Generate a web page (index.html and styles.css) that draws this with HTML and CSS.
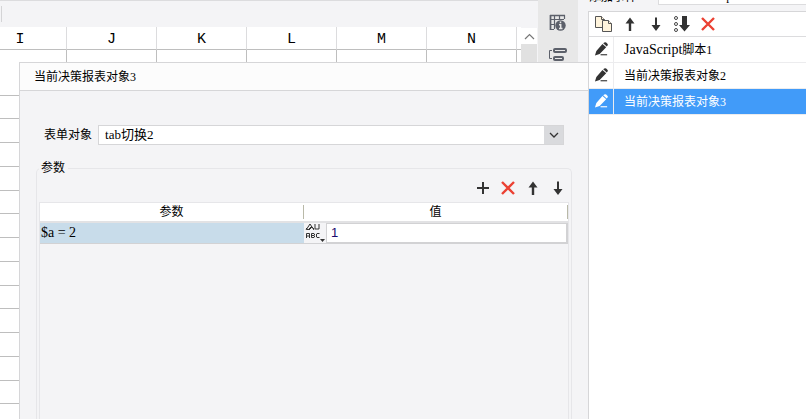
FILE: index.html
```html
<!DOCTYPE html>
<html lang="zh-CN">
<head>
  <meta charset="UTF-8" />
  <title>当前决策报表对象</title>
  <link rel="stylesheet" href="styles.css">
</head>
<body>
  <!-- shared icons -->
  <svg class="hidden">
    <symbol id="up" viewBox="0 0 16 16"><path d="M8 1.5L12.5 7.5H9.2V15H6.8V7.5H3.5Z" /></symbol>
    <symbol id="down" viewBox="0 0 16 16"><path d="M8 15L12.5 9H9V1.5H7V9H3.5Z" /></symbol>
    <symbol id="cross" viewBox="0 0 16 16"><path d="M2 2L14 14M14 2L2 14" fill="none" stroke="#eb4133" stroke-width="2.4" /></symbol>
    <symbol id="pen" viewBox="0 0 16 16"><path d="M1 14.500L2.500 9.500L9 2L13 5.500L6 12.800ZM9.800 1.300L11 .4Q12 -.2 13 .6L14.300 1.800Q15.200 2.800 14.400 3.800L13.600 4.800Z" /><path d="M7 13H14V14.200H7Z" /></symbol>
  </svg>

  <div class="app">
    <!-- Spreadsheet -->
    <div class="sheet">
      <div class="sheet-bar"><span class="sep"></span></div>
      <div class="sheet-main">
        <div class="grid">
          <table class="cells">
            <colgroup><col class="first"><col><col><col><col><col><col></colgroup>
            <thead>
              <tr><th>I</th><th>J</th><th>K</th><th>L</th><th>M</th><th>N</th><th></th></tr>
            </thead>
            <tbody>
              <tr><td></td><td></td><td></td><td></td><td></td><td></td><td></td></tr>
              <tr><td></td><td></td><td></td><td></td><td></td><td></td><td></td></tr>
              <tr><td></td><td></td><td></td><td></td><td></td><td></td><td></td></tr>
              <tr><td></td><td></td><td></td><td></td><td></td><td></td><td></td></tr>
              <tr><td></td><td></td><td></td><td></td><td></td><td></td><td></td></tr>
              <tr><td></td><td></td><td></td><td></td><td></td><td></td><td></td></tr>
              <tr><td></td><td></td><td></td><td></td><td></td><td></td><td></td></tr>
              <tr><td></td><td></td><td></td><td></td><td></td><td></td><td></td></tr>
              <tr><td></td><td></td><td></td><td></td><td></td><td></td><td></td></tr>
              <tr><td></td><td></td><td></td><td></td><td></td><td></td><td></td></tr>
              <tr><td></td><td></td><td></td><td></td><td></td><td></td><td></td></tr>
              <tr><td></td><td></td><td></td><td></td><td></td><td></td><td></td></tr>
              <tr><td></td><td></td><td></td><td></td><td></td><td></td><td></td></tr>
              <tr><td></td><td></td><td></td><td></td><td></td><td></td><td></td></tr>
            </tbody>
          </table>
        </div>
        <div class="scroll">
          <button class="scroll-up" aria-label="向上滚动"><svg width="11" height="7" viewBox="0 0 11 7"><path d="M1 6L5.500 1.500L10 6" fill="none" stroke="#777" stroke-width="1.200" /></svg></button>
          <div class="thumb"></div>
        </div>
      </div>
    </div>

    <!-- Tool strip -->
    <div class="strip">
      <button aria-label="单元格属性">
        <svg width="18" height="18" viewBox="0 0 18 18" fill="none" stroke="#5c606a">
          <path d="M5 15.500H1.500V1.500H15.500V5M2 5.500H15M5.500 2V15M10.500 2V6M2 10.500H6" stroke-width="1.200" />
          <path d="M1 1.500H16M1.500 1V16" stroke-width="1.600" />
          <circle cx="11.500" cy="11.500" r="5.200" fill="#5c606a" stroke="none" />
          <path d="M11.500 7.500V9.200M10 10.700H11.700V14.500M10 14.500H13.500" stroke="#e8e8e8" stroke-width="1.500" />
        </svg>
      </button>
      <button aria-label="控件设置">
        <svg width="20" height="14" viewBox="0 0 20 14" fill="none" stroke="#5c606a">
          <path d="M4 2.500H1.500V10.500H4" />
          <rect x="6" y="1" width="12" height="3" rx="1" stroke-width="2" />
          <rect x="6" y="9" width="9" height="3" rx="1" stroke-width="2" />
        </svg>
      </button>
    </div>

    <!-- Event list -->
    <div class="panel">
      <div class="tabs">
        <button class="tab"><span>添加事件</span></button>
        <button class="tab second"><span>JavaScript</span></button>
      </div>
      <div class="list-box">
        <div class="tools">
          <button aria-label="复制">
            <svg width="18" height="16" viewBox="0 0 18 16" fill="#fff4dc" stroke="#555">
              <path d="M.5 .5H6.500L9.500 3.500V11.500H.5Z" /><path d="M6.500 .5V3.500H9.500" />
              <path d="M7.500 4.500H13.500L16.500 7.500V15.500H7.500Z" /><path d="M13.500 4.500V7.500H16.500" />
            </svg>
          </button>
          <button aria-label="上移"><svg width="16" height="16"><use href="#up" /></svg></button>
          <button aria-label="下移"><svg width="16" height="16"><use href="#down" /></svg></button>
          <button aria-label="排序">
            <svg width="18" height="18" viewBox="0 0 18 18">
              <g fill="none" stroke="#444"><circle cx="3" cy="3" r="1.500" /><circle cx="3" cy="9" r="1.500" /><circle cx="3" cy="15" r="1.500" /></g>
              <path d="M9 1H14V10H17L11.500 16.500L6 10H9Z" />
            </svg>
          </button>
          <button aria-label="删除"><svg width="16" height="16"><use href="#cross" /></svg></button>
        </div>
        <ul class="events">
          <li><span class="edit"><svg width="15" height="15"><use href="#pen" /></svg></span><span class="name"><span class="latin">JavaScript</span>脚本1</span></li>
          <li><span class="edit"><svg width="15" height="15"><use href="#pen" /></svg></span><span class="name">当前决策报表对象2</span></li>
          <li class="active"><span class="edit"><svg width="15" height="15"><use href="#pen" /></svg></span><span class="name">当前决策报表对象3</span></li>
        </ul>
      </div>
    </div>

    <!-- Dialog over the sheet -->
    <div class="dialog">
      <div class="dialog-title">当前决策报表对象3</div>
      <div class="dialog-body">
        <div class="field">
          <label for="target">表单对象</label>
          <div class="combo">
            <select id="target"><option>tab切换2</option></select>
            <span class="arrow"><svg width="10" height="6" viewBox="0 0 10 6"><path d="M1 1L5 5L9 1" fill="none" stroke="#333" stroke-width="1.300" /></svg></span>
          </div>
        </div>
        <fieldset>
          <legend>参数</legend>
          <div class="param-tools">
            <button aria-label="添加"><svg width="16" height="16" viewBox="0 0 16 16"><path d="M7 2H9V7H14V9H9V14H7V9H2V7H7Z" /></svg></button>
            <button aria-label="删除"><svg width="16" height="16"><use href="#cross" /></svg></button>
            <button aria-label="上移"><svg width="16" height="16"><use href="#up" /></svg></button>
            <button aria-label="下移"><svg width="16" height="16"><use href="#down" /></svg></button>
          </div>
          <div class="param-box">
            <table class="params">
              <thead>
                <tr><th><span>参数</span></th><th><span>值</span></th></tr>
              </thead>
              <tbody>
                <tr>
                  <td class="key">$a = 2</td>
                  <td>
                    <div class="value">
                      <button class="type" aria-label="类型">
                        <svg width="21" height="20" viewBox="0 0 21 20" fill="none" stroke="#333">
                          <path d="M1 7L5 1L9 7M1 5L3 7L7 3M4 7L7 4L9 6M10 1V6H14V1" />
                          <path d="M1.500 15V10.500H4.500V15M2 13H4M6.500 10.500H9L9.500 11V12L9 12.500H6.500M9 12.500L9.500 13V14L9 14.500H6.500V10.500M14.500 10.500H12L11.500 11V14L12 14.500H14.500" />
                          <path d="M15 16H20L17.500 19Z" fill="#333" stroke="none" />
                        </svg>
                      </button>
                      <input type="text" value="1" aria-label="值">
                    </div>
                  </td>
                </tr>
              </tbody>
            </table>
          </div>
        </fieldset>
      </div>
    </div>
  </div>
</body>
</html>
```
FILE: styles.css
```css
* { box-sizing: border-box; }
body { margin: 0; font: 12px/16px "Liberation Serif", "Noto Sans CJK SC", serif; color: #000; background: #f4f4f6; overflow: hidden; }
button { padding: 0; border: none; background: none; font: inherit; color: inherit; display: flex; align-items: center; justify-content: center; }
svg { display: block; flex: none; }
svg:not([fill]) { fill: #333; }
.hidden { position: absolute; width: 0; height: 0; }
.app { position: relative; display: flex; height: 100vh; overflow: hidden; }

/* spreadsheet */
.sheet { flex: 1; min-width: 0; display: flex; flex-direction: column; border-top: 1px solid #dcdcde; }
.sheet-bar { height: 26px; padding: 5px 1px; }
.sep { display: block; width: 1px; height: 16px; background: #d4d4d6; }
.sheet-main { flex: 1; min-height: 0; display: flex; }
.grid { flex: 1; overflow: hidden; background: #fff; }
.cells { width: 607px; table-layout: fixed; border-collapse: separate; border-spacing: 0; }
.cells col { width: 90px; }
.cells col.first { width: 67px; }
.cells th { height: 23px; padding: 4px 0 0; border-right: 1px solid #dcdcde; border-bottom: 1px solid #bebebe; font: 15px/16px "Liberation Mono", monospace; }
.cells th:first-child { padding-right: 26px; }
.cells td { height: 24px; padding: 0; border-right: 1px solid #bebebe; border-bottom: 1px solid #bebebe; }
.cells tbody tr:first-child td { height: 46px; }
.cells tbody tr:nth-child(4n+2) td { height: 23px; }
.scroll { width: 17px; padding: 1px 1px 0 0; display: flex; flex-direction: column; }
.scroll-up { width: 16px; height: 16px; background: #fff; }
.thumb { flex: 1; background: #e1e1e1; }

/* tool strip */
.strip { width: 40px; padding-top: 14px; background: #e8e8e8; display: flex; flex-direction: column; align-items: center; gap: 16px; }

/* event list */
.panel { width: 228px; padding-left: 10px; display: flex; flex-direction: column; }
.tabs { display: flex; height: 11px; }
.tab { width: 70px; height: 5px; padding-right: 20px; align-items: flex-end; overflow: hidden; }
.tab.second { flex: 1; padding-right: 44px; background: #fff; border-left: 1px solid #dcdcde; border-bottom: 1px solid #dcdcde; }
.list-box { flex: 1; background: #fff; border-left: 1px solid #d6d6d8; border-top: 1px solid #d6d6d8; }
.tools { display: flex; align-items: center; height: 25px; padding-left: 2px; border-bottom: 1px solid #dcdcde; }
.tools button { width: 26px; }
.events { margin: 0; padding: 0; list-style: none; }
.events li { display: flex; height: 26px; border-bottom: 1px solid #ececee; }
.edit { width: 25px; border-right: 1px solid #ececee; display: flex; align-items: center; justify-content: center; }
.name { padding: 5px 10px 0; white-space: nowrap; }
.latin { font-size: 14px; }
.events .active { background: #419bf9; color: #fff; }
.events .active svg { fill: #fff; }

/* dialog */
.dialog { position: absolute; left: 19px; right: 218px; top: 62px; bottom: 0; display: flex; flex-direction: column; background: #f4f4f6; border-left: 1px solid #d6d6d8; border-top: 1px solid #d6d6d8; }
.dialog-title { height: 28px; padding: 6px 14px 0; background: #fcfcfc; border-bottom: 1px solid #d6d6d8; }
.dialog-body { flex: 1; min-height: 0; padding: 34px 16px 0; display: flex; flex-direction: column; }
.field { display: flex; align-items: center; gap: 6px; padding: 0 8px; }
.combo { flex: 1; height: 20px; display: flex; border: 1px solid #d6d6d8; background: #fff; }
.combo select { flex: 1; padding: 0 6px; border: none; background: none; appearance: none; font: 13px/16px "Liberation Serif", "Noto Sans CJK SC", serif; color: #000; }
.arrow { width: 19px; background: #d9dadd; display: flex; align-items: center; justify-content: center; pointer-events: none; }
fieldset { flex: 1; min-width: 0; min-height: 0; margin: 15px 0 0; padding: 0 2px; border: 1px solid #e6e6e9; border-bottom: none; border-radius: 5px 5px 0 0; display: flex; flex-direction: column; }
legend { padding: 0 3px 0 2px; }
.param-tools { display: flex; justify-content: flex-end; gap: 9px; padding: 4px 3px 6px 0; }
.param-box { flex: 1; min-height: 0; border: 1px solid #e6e6e9; border-bottom: none; }
.params { width: 100%; table-layout: fixed; border-collapse: separate; border-spacing: 0; }
.params th { height: 20px; padding: 0; background: #fff; border-bottom: 2px solid #e2e2e4; font-weight: normal; }
.params th span { display: block; border-right: 1px solid #b9b9a8; line-height: 14px; }
.params td { padding: 0; border-bottom: 1px solid #d2d2d4; }
.params .key { padding-left: 1px; background: #c8dcea; font-size: 14px; }
.value { display: flex; height: 20px; }
.type { width: 22px; }
.value input { flex: 1; min-width: 0; padding: 0 4px; border: 1px solid #d2d2d4; border-right-width: 2px; background: #fff; color: #1a0a6e; font: 13px/16px "Liberation Sans", sans-serif; }
```
